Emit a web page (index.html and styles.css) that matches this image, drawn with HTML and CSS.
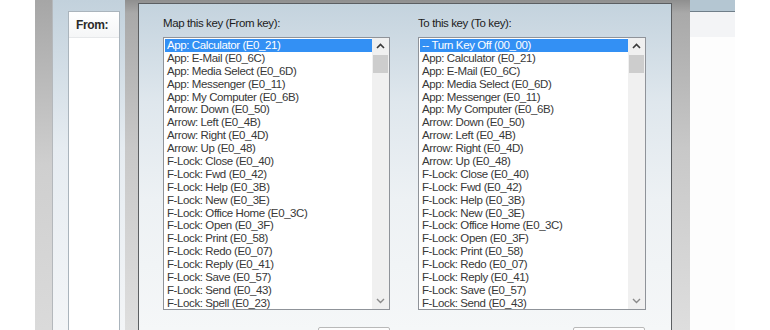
FILE: index.html
```html
<!DOCTYPE html>
<html lang="en">
<head>
    <meta charset="UTF-8">
    <title>SharpKeys - Add New Key Mapping</title>
    <link rel="stylesheet" href="styles.css">
</head>
<body>
    <div class="screen">
        <div class="gap-left"></div>
        <div class="frame-left"></div>

        <div class="main-client">
            <div class="col-box">
                <div class="col-head">From:</div>
            </div>
            <div class="client-edge"></div>
        </div>

        <div class="dlg-window">
            <div class="dialog">
                <div class="pane pane-from">
                    <div class="pane-label">Map this key (From key):</div>
                    <div class="listbox">
                        <div class="items">
                            <div class="item selected">App: Calculator (E0_21)</div>
                            <div class="item">App: E-Mail (E0_6C)</div>
                            <div class="item">App: Media Select (E0_6D)</div>
                            <div class="item">App: Messenger (E0_11)</div>
                            <div class="item">App: My Computer (E0_6B)</div>
                            <div class="item">Arrow: Down (E0_50)</div>
                            <div class="item">Arrow: Left (E0_4B)</div>
                            <div class="item">Arrow: Right (E0_4D)</div>
                            <div class="item">Arrow: Up (E0_48)</div>
                            <div class="item">F-Lock: Close (E0_40)</div>
                            <div class="item">F-Lock: Fwd (E0_42)</div>
                            <div class="item">F-Lock: Help (E0_3B)</div>
                            <div class="item">F-Lock: New (E0_3E)</div>
                            <div class="item">F-Lock: Office Home (E0_3C)</div>
                            <div class="item">F-Lock: Open (E0_3F)</div>
                            <div class="item">F-Lock: Print (E0_58)</div>
                            <div class="item">F-Lock: Redo (E0_07)</div>
                            <div class="item">F-Lock: Reply (E0_41)</div>
                            <div class="item">F-Lock: Save (E0_57)</div>
                            <div class="item">F-Lock: Send (E0_43)</div>
                            <div class="item">F-Lock: Spell (E0_23)</div>
                        </div>
                        <div class="sb">
                            <div class="sb-btn">
                                <svg width="9" height="6" viewBox="0 0 9 6"><path d="M1 5 L4.5 1.5 L8 5" fill="none" stroke="#3a3a3a" stroke-width="1.6"/></svg>
                            </div>
                            <div class="sb-thumb"></div>
                            <div class="sb-track"></div>
                            <div class="sb-btn">
                                <svg width="9" height="6" viewBox="0 0 9 6"><path d="M1 1 L4.5 4.5 L8 1" fill="none" stroke="#8a8a8a" stroke-width="1.4"/></svg>
                            </div>
                        </div>
                    </div>
                    <div class="btn-row"><div class="btn"></div></div>
                </div>

                <div class="pane pane-to">
                    <div class="pane-label">To this key (To key):</div>
                    <div class="listbox">
                        <div class="items">
                            <div class="item selected">-- Turn Key Off (00_00)</div>
                            <div class="item">App: Calculator (E0_21)</div>
                            <div class="item">App: E-Mail (E0_6C)</div>
                            <div class="item">App: Media Select (E0_6D)</div>
                            <div class="item">App: Messenger (E0_11)</div>
                            <div class="item">App: My Computer (E0_6B)</div>
                            <div class="item">Arrow: Down (E0_50)</div>
                            <div class="item">Arrow: Left (E0_4B)</div>
                            <div class="item">Arrow: Right (E0_4D)</div>
                            <div class="item">Arrow: Up (E0_48)</div>
                            <div class="item">F-Lock: Close (E0_40)</div>
                            <div class="item">F-Lock: Fwd (E0_42)</div>
                            <div class="item">F-Lock: Help (E0_3B)</div>
                            <div class="item">F-Lock: New (E0_3E)</div>
                            <div class="item">F-Lock: Office Home (E0_3C)</div>
                            <div class="item">F-Lock: Open (E0_3F)</div>
                            <div class="item">F-Lock: Print (E0_58)</div>
                            <div class="item">F-Lock: Redo (E0_07)</div>
                            <div class="item">F-Lock: Reply (E0_41)</div>
                            <div class="item">F-Lock: Save (E0_57)</div>
                            <div class="item">F-Lock: Send (E0_43)</div>
                        </div>
                        <div class="sb">
                            <div class="sb-btn">
                                <svg width="9" height="6" viewBox="0 0 9 6"><path d="M1 5 L4.5 1.5 L8 5" fill="none" stroke="#3a3a3a" stroke-width="1.6"/></svg>
                            </div>
                            <div class="sb-thumb"></div>
                            <div class="sb-track"></div>
                            <div class="sb-btn">
                                <svg width="9" height="6" viewBox="0 0 9 6"><path d="M1 1 L4.5 4.5 L8 1" fill="none" stroke="#8a8a8a" stroke-width="1.4"/></svg>
                            </div>
                        </div>
                    </div>
                    <div class="btn-row"><div class="btn"></div></div>
                </div>
            </div>
        </div>

        <div class="main-right">
            <div class="right-head"></div>
            <div class="right-strip"></div>
        </div>
        <div class="gap-right"></div>
    </div>
</body>
</html>
```

FILE: styles.css
```css
/* page */
html, body {
    margin: 0;
    padding: 0;
    width: 100%;
    height: 100%;
    overflow: hidden;
    background-color: #ffffff;
    font-family: 'Liberation Sans', Arial, sans-serif;
}

.screen {
    display: flex;
    height: 330px;
}

.gap-left {
    width: 35px;
    flex-shrink: 0;
}

.gap-right {
    flex: 1;
}

/* main window behind the dialog */
.frame-left {
    width: 17px;
    flex-shrink: 0;
    border-right: 1px solid #b4b8bc;
    background: linear-gradient(to bottom, #a6a6a6, #cfcfcf 50%, #dadada);
}

.main-client {
    width: 72px;
    flex-shrink: 0;
    display: flex;
    padding-top: 11px;
    padding-left: 15px;
    box-sizing: border-box;
    background: linear-gradient(to bottom, #c2d1dc, #e6ecf1 45%, #f3f5f7);
}

.col-box {
    width: 52px;
    box-sizing: border-box;
    border: 1px solid #aab4bc;
    border-bottom: none;
    background-color: #ffffff;
}

.col-head {
    height: 25px;
    line-height: 26px;
    padding-left: 7px;
    font-size: 12px;
    font-weight: bold;
    letter-spacing: -0.4px;
    color: #2b2b2b;
    border-bottom: 1px solid #e6e8ea;
    background: linear-gradient(to bottom, #ffffff, #f5f6f7);
}

.client-edge {
    flex: 1;
}

/* dialog */
.dlg-window {
    width: 565px;
    flex-shrink: 0;
    padding: 3px 18px 0 13px;
    box-sizing: border-box;
    display: flex;
    background: linear-gradient(to bottom, #8f8f8f, #a9a9a9 4%, #c8c8c8 45%, #dedede);
}

.dialog {
    flex: 1;
    display: flex;
    gap: 28px;
    padding: 12px 25px 0 24px;
    border: 1px solid #5c5f62;
    border-bottom: none;
    overflow: hidden;
    background: linear-gradient(to bottom, #c4d3de, #dfe7ed 30%, #edf1f4 60%, #f5f7f8);
}

.pane {
    width: 227px;
    display: flex;
    flex-direction: column;
}

.pane-to {
    width: 228px;
}

.pane-label {
    height: 14px;
    line-height: 14px;
    margin-bottom: 7px;
    flex-shrink: 0;
    font-size: 11.5px;
    letter-spacing: -0.4px;
    color: #1c1c1c;
}

.listbox {
    height: 273px;
    flex-shrink: 0;
    box-sizing: border-box;
    display: flex;
    border: 1px solid #8f9399;
    background-color: #ffffff;
    overflow: hidden;
}

.items {
    flex: 1;
    padding: 1px 0 0 1px;
    overflow: hidden;
}

.item {
    height: 12.9px;
    line-height: 12.9px;
    padding-left: 2px;
    font-size: 11.5px;
    letter-spacing: -0.4px;
    color: #383838;
    white-space: nowrap;
}

.item.selected {
    background-color: #3390f4;
    color: #ffffff;
}

/* scrollbar */
.sb {
    width: 17px;
    display: flex;
    flex-direction: column;
    background-color: #f0f0f0;
}

.sb-btn {
    height: 16px;
    display: flex;
    align-items: center;
    justify-content: center;
}

.sb-thumb {
    height: 18px;
    margin: 1px 1px 0 1px;
    background-color: #cdcdcd;
}

.sb-track {
    flex: 1;
}

/* buttons (tops only are visible) */
.btn-row {
    display: flex;
    flex-shrink: 0;
    justify-content: flex-end;
    margin-top: 17px;
}

.pane-to .btn-row {
    padding-right: 1px;
}

.btn {
    width: 72px;
    height: 22px;
    box-sizing: border-box;
    border: 1px solid #b9b9b9;
    border-radius: 2px;
    background-color: #fdfdfd;
}

/* main window column on the right */
.main-right {
    width: 45px;
    flex-shrink: 0;
    display: flex;
    flex-direction: column;
    background-color: #fdfdfd;
}

.right-head {
    height: 11px;
    border-bottom: 1px solid #6f7e89;
    background-color: #b4c6d2;
}

.right-strip {
    height: 25px;
    background-color: #f3f4f6;
}
```
